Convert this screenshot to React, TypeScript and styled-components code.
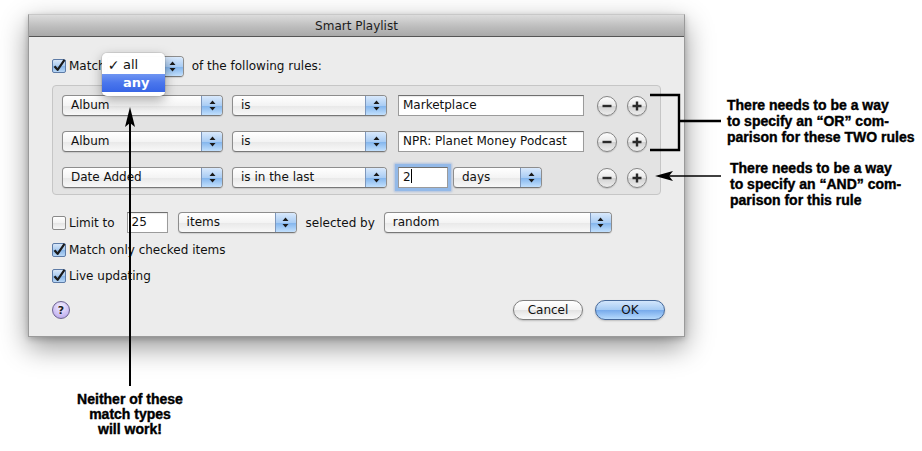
import React from 'react';
import styled, { createGlobalStyle } from 'styled-components';

const GlobalStyle = createGlobalStyle`
  html, body { margin: 0; padding: 0; background: #fff; }
  body {
    font-family: "DejaVu Sans", "Liberation Sans", sans-serif;
    font-size: 12px;
    color: #111;
  }
`;

const Page = styled.div`
  position: relative;
  width: 922px;
  height: 451px;
  overflow: hidden;
  background: #fff;
`;

const TopRow = styled.div`
  display: flex;
  align-items: flex-start;
`;

const Dialog = styled.div`
  margin: 14px 0 0 28px;
  width: 657px;
  height: 323px;
  box-sizing: border-box;
  background: #ececec;
  border: 1px solid #9a9a9a;
  border-top-color: #c8c8c8;
  box-shadow: 0 10px 26px rgba(0, 0, 0, 0.42), 0 2px 6px rgba(0, 0, 0, 0.2);
  display: flex;
  flex-direction: column;
`;

const TitleBar = styled.div`
  height: 21px;
  flex: none;
  display: flex;
  align-items: center;
  justify-content: center;
  background: linear-gradient(#dcdcdc, #bdbdbd 55%, #a9a9a9);
  border-bottom: 1px solid #555;
  color: #1c1c1c;
  font-size: 12px;
`;

const Body = styled.div`
  flex: 1;
  display: flex;
  flex-direction: column;
  padding: 19px 23px 0 23px;
`;

const MatchRow = styled.div`
  position: relative;
  display: flex;
  align-items: center;
  height: 20px;
`;

const Label = styled.span<{ $gap?: number }>`
  margin-left: ${(p) => p.$gap ?? 0}px;
  white-space: nowrap;
`;

const Box = styled.span<{ $checked?: boolean }>`
  flex: none;
  width: 14px;
  height: 14px;
  box-sizing: border-box;
  border-radius: 2px;
  border: 1px solid ${(p) => (p.$checked ? '#5d7ba6' : '#8a8a8a')};
  background: ${(p) =>
    p.$checked
      ? 'linear-gradient(#d6e6f8, #a9cbf0 50%, #86b4e8 51%, #b8d7f6)'
      : 'linear-gradient(#ffffff, #f1f1f1 50%, #e4e4e4 51%, #f7f7f7)'};
  display: flex;
  align-items: center;
  justify-content: center;
  margin-right: 3px;
  overflow: visible;
`;

const CheckBox: React.FC<{ checked?: boolean }> = ({ checked }) => (
  <Box $checked={checked}>
    {checked && (
      <svg width="14" height="14" viewBox="0 0 14 14" style={{ overflow: 'visible' }}>
        <path d="M2.5 7.2 L5.6 10.8 L12.5 0.8" fill="none" stroke="#1b1b1b" strokeWidth="2.2" strokeLinejoin="round" />
      </svg>
    )}
  </Box>
);

const PopWrap = styled.div<{ $w: number; $ml?: number }>`
  flex: none;
  width: ${(p) => p.$w}px;
  height: 21px;
  margin-left: ${(p) => p.$ml ?? 0}px;
  box-sizing: border-box;
  border: 1px solid #8d8d8d;
  border-bottom-color: #777;
  border-radius: 4px;
  background: linear-gradient(#ffffff, #f4f4f4 50%, #e8e8e8 51%, #f8f8f8);
  box-shadow: 0 1px 1px rgba(0, 0, 0, 0.12);
  display: flex;
  overflow: hidden;
`;

const PopText = styled.span`
  flex: 1;
  padding-left: 8px;
  line-height: 19px;
  white-space: nowrap;
  overflow: hidden;
`;

const Stepper = styled.span`
  flex: none;
  width: 20px;
  border-left: 1px solid #7d97bc;
  background: linear-gradient(#d9e9fc, #aacdf4 50%, #80b3ec 51%, #c2e0fd);
  display: flex;
  align-items: center;
  justify-content: center;
`;

const PopUp: React.FC<{ w: number; ml?: number; text?: string }> = ({ w, ml, text }) => (
  <PopWrap $w={w} $ml={ml}>
    <PopText>{text}</PopText>
    <Stepper>
      <svg width="7" height="11" viewBox="0 0 7 11">
        <path d="M3.5 0.5 L6.5 4 H0.5 Z M3.5 10.5 L6.5 7 H0.5 Z" fill="#1a1a1a" />
      </svg>
    </Stepper>
  </PopWrap>
);

// the open menu of the "Match" pop-up, lying over its button
const Menu = styled.div`
  position: absolute;
  left: 50px;
  top: -3px;
  width: 63px;
  padding: 3px 0 4px;
  background: rgba(255, 255, 255, 0.98);
  border-radius: 5px;
  box-shadow: 0 4px 12px rgba(0, 0, 0, 0.35), 0 0 0 1px rgba(0, 0, 0, 0.08);
  z-index: 2;
`;

const MenuItem = styled.div<{ $on?: boolean }>`
  height: 18px;
  line-height: 18px;
  display: flex;
  font-size: 13px;
  color: ${(p) => (p.$on ? '#fff' : '#111')};
  font-weight: ${(p) => (p.$on ? 700 : 400)};
  background: ${(p) => (p.$on ? 'linear-gradient(#6f95f2, #4a76ec 50%, #3765e6)' : 'transparent')};
`;

const Mark = styled.span`
  width: 21px;
  flex: none;
  text-align: center;
  padding-left: 2px;
  box-sizing: border-box;
  font-size: 14px;
  font-weight: 700;
`;

const RulesBox = styled.div`
  margin-top: 9px;
  width: 609px;
  height: 110px;
  box-sizing: border-box;
  border: 1px solid #c6c6c6;
  border-radius: 4px;
  background: #e3e3e3;
  padding: 9px 0 0 9px;
  display: flex;
  flex-direction: column;
  gap: 15px;
`;

const Row = styled.div`
  display: flex;
  align-items: center;
  height: 21px;
`;

const Field = styled.div<{ $w: number; $ml?: number; $focus?: boolean }>`
  flex: none;
  width: ${(p) => p.$w}px;
  height: 21px;
  margin-left: ${(p) => p.$ml ?? 0}px;
  box-sizing: border-box;
  background: #fff;
  border: 1px solid #9b9b9b;
  border-top-color: #6f6f6f;
  padding-left: 4px;
  line-height: 19px;
  white-space: nowrap;
  box-shadow: ${(p) => (p.$focus ? '0 0 0 3px #93b9e8, 0 0 2px 4px rgba(120,160,220,0.5)' : 'inset 0 1px 1px rgba(0,0,0,0.08)')};
`;

const Caret = styled.span`
  display: inline-block;
  width: 1px;
  height: 14px;
  background: #000;
  vertical-align: -2px;
`;

const ValueCell = styled.div`
  flex: none;
  width: 186px;
  margin-left: 11px;
  display: flex;
  align-items: center;
`;

const RoundGroup = styled.div`
  display: flex;
  gap: 10px;
  margin-left: 13px;
`;

const RoundBtn = styled.span`
  width: 20px;
  height: 20px;
  box-sizing: border-box;
  border-radius: 50%;
  border: 1px solid #858585;
  background: linear-gradient(#fdfdfd, #e9e9e9 50%, #d2d2d2 51%, #ededed);
  box-shadow: 0 1px 1px rgba(0, 0, 0, 0.15);
  display: flex;
  align-items: center;
  justify-content: center;
`;

const Minus = () => (
  <RoundBtn>
    <svg width="12" height="12" viewBox="0 0 12 12">
      <path d="M1.5 6 H10.5" stroke="#2b2b2b" strokeWidth="2.4" />
    </svg>
  </RoundBtn>
);

const Plus = () => (
  <RoundBtn>
    <svg width="12" height="12" viewBox="0 0 12 12">
      <path d="M1.5 6 H10.5 M6 1.5 V10.5" stroke="#2b2b2b" strokeWidth="2.4" />
    </svg>
  </RoundBtn>
);

const Options = styled.div`
  margin-top: 17px;
  display: flex;
  flex-direction: column;
  gap: 8px;
`;

const OptRow = styled.div<{ $h?: number }>`
  display: flex;
  align-items: center;
  height: ${(p) => p.$h ?? 18}px;
`;

const Footer = styled.div`
  margin-top: 15px;
  margin-right: -4px;
  display: flex;
  align-items: center;
  justify-content: space-between;
`;

const Help = styled.span`
  width: 18px;
  height: 18px;
  box-sizing: border-box;
  border-radius: 50%;
  border: 1px solid #6d6390;
  background: radial-gradient(circle at 50% 30%, #f4f0ff, #cdbff3 60%, #a996e4);
  display: flex;
  align-items: center;
  justify-content: center;
  font-weight: 700;
  font-size: 11px;
  color: #1e1e1e;
`;

const Buttons = styled.div`
  display: flex;
  gap: 12px;
`;

const PushBtn = styled.span<{ $primary?: boolean }>`
  width: 70px;
  height: 20px;
  box-sizing: border-box;
  border-radius: 10px;
  border: 1px solid ${(p) => (p.$primary ? '#46699a' : '#7f7f7f')};
  background: ${(p) =>
    p.$primary
      ? 'linear-gradient(#d2e6fc, #a5cbf4 50%, #76aaeb 51%, #b6dafd)'
      : 'linear-gradient(#ffffff, #f3f3f3 50%, #e3e3e3 51%, #fafafa)'};
  box-shadow: 0 1px 2px rgba(0, 0, 0, 0.2);
  display: flex;
  align-items: center;
  justify-content: center;
  color: #111;
`;

const SideNotes = styled.div`
  padding: 97px 0 0 42px;
  display: flex;
  flex-direction: column;
`;

const Note = styled.div<{ $mt?: number; $ml?: number; $center?: boolean }>`
  margin-top: ${(p) => p.$mt ?? 0}px;
  margin-left: ${(p) => p.$ml ?? 0}px;
  font-family: "Liberation Sans", Arial, sans-serif;
  font-weight: 700;
  font-size: 14px;
  line-height: 16px;
  color: #000;
  -webkit-text-stroke: 0.4px #000;
  white-space: nowrap;
  text-align: ${(p) => (p.$center ? 'center' : 'left')};
`;

const BottomNote = styled(Note)`
  width: 140px;
  line-height: 15px;
`;

const Overlay = styled.svg`
  position: absolute;
  left: 0;
  top: 0;
  pointer-events: none;
  z-index: 3;
`;

export default function App() {
  return (
    <Page>
      <GlobalStyle />
      <TopRow>
        <Dialog>
          <TitleBar>Smart Playlist</TitleBar>
          <Body>
            <MatchRow>
              <CheckBox checked />
              <Label>Match</Label>
              <PopUp w={77} ml={1} />
              <Label $gap={8}>of the following rules:</Label>
              <Menu>
                <MenuItem>
                  <Mark>✓</Mark>all
                </MenuItem>
                <MenuItem $on>
                  <Mark />any
                </MenuItem>
              </Menu>
            </MatchRow>

            <RulesBox>
              <Row>
                <PopUp w={161} text="Album" />
                <PopUp w={155} ml={9} text="is" />
                <ValueCell>
                  <Field $w={186}>Marketplace</Field>
                </ValueCell>
                <RoundGroup>
                  <Minus />
                  <Plus />
                </RoundGroup>
              </Row>
              <Row>
                <PopUp w={161} text="Album" />
                <PopUp w={155} ml={9} text="is" />
                <ValueCell>
                  <Field $w={186}>NPR: Planet Money Podcast</Field>
                </ValueCell>
                <RoundGroup>
                  <Minus />
                  <Plus />
                </RoundGroup>
              </Row>
              <Row>
                <PopUp w={161} text="Date Added" />
                <PopUp w={155} ml={9} text="is in the last" />
                <ValueCell>
                  <Field $w={50} $focus>
                    2<Caret />
                  </Field>
                  <PopUp w={89} ml={5} text="days" />
                </ValueCell>
                <RoundGroup>
                  <Minus />
                  <Plus />
                </RoundGroup>
              </Row>
            </RulesBox>

            <Options>
              <OptRow $h={21}>
                <CheckBox />
                <Label>Limit to</Label>
                <Field $w={41} $ml={12}>25</Field>
                <PopUp w={119} ml={10} text="items" />
                <Label $gap={9}>selected by</Label>
                <PopUp w={228} ml={9} text="random" />
              </OptRow>
              <OptRow>
                <CheckBox checked />
                <Label>Match only checked items</Label>
              </OptRow>
              <OptRow>
                <CheckBox checked />
                <Label>Live updating</Label>
              </OptRow>
            </Options>

            <Footer>
              <Help>?</Help>
              <Buttons>
                <PushBtn>Cancel</PushBtn>
                <PushBtn $primary>OK</PushBtn>
              </Buttons>
            </Footer>
          </Body>
        </Dialog>

        <SideNotes>
          <Note>
            There needs to be a way
            <br />
            to specify an “OR” com-
            <br />
            parison for these TWO rules
          </Note>
          <Note $mt={15} $ml={3}>
            There needs to be a way
            <br />
            to specify an “AND” com-
            <br />
            parison for this rule
          </Note>
        </SideNotes>
      </TopRow>

      <BottomNote $mt={55} $ml={60} $center>
        Neither of these
        <br />
        match types
        <br />
        will work!
      </BottomNote>

      <Overlay width="922" height="451" viewBox="0 0 922 451">
        {/* bracket round the two OR rules */}
        <path d="M650 95 H679 V150 H650 M679 121 H721" fill="none" stroke="#000" strokeWidth="2.4" />
        {/* arrow to the AND rule */}
        <path d="M668 176 H721" stroke="#000" strokeWidth="1.6" />
        <polygon points="655,176 673,171 669,176 673,181" fill="#000" />
        {/* arrow up to the match menu */}
        <path d="M130 122 V386" stroke="#000" strokeWidth="2" />
        <polygon points="130,107 125,127 130,123 135,127" fill="#000" />
      </Overlay>
    </Page>
  );
}
